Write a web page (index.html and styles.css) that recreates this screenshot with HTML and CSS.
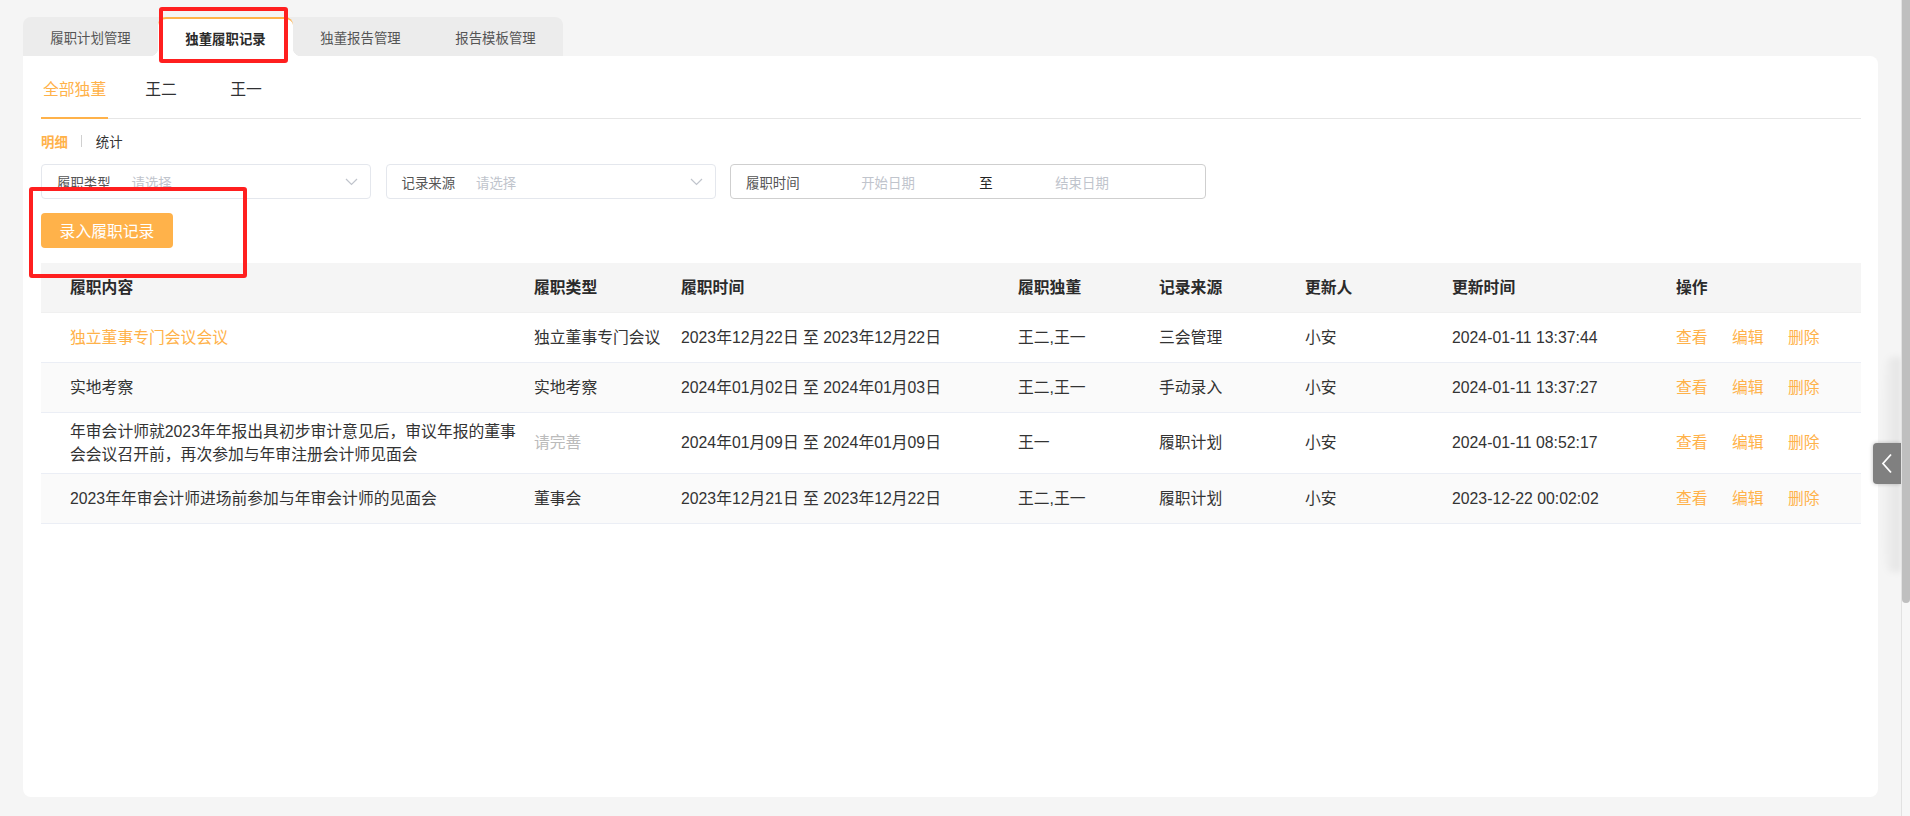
FILE: index.html
```html
<!DOCTYPE html>
<html lang="zh-CN">
<head>
<meta charset="utf-8">
<title>独董履职记录</title>
<link rel="stylesheet" href="styles.css">
</head>
<body>
<div class="page">
  <div class="tabs">
    <div class="tab">履职计划管理</div>
    <div class="tab active">独董履职记录</div>
    <div class="tab">独董报告管理</div>
    <div class="tab">报告模板管理</div>
  </div>
  <div class="panel">
    <div class="subtabs">
      <div class="subtab active"><span>全部独董</span></div>
      <div class="subtab"><span>王二</span></div>
      <div class="subtab"><span>王一</span></div>
    </div>
    <div class="views">
      <span class="view active">明细</span>
      <span class="sep"></span>
      <span class="view">统计</span>
    </div>
    <div class="filters">
      <div class="select">
        <span class="flabel">履职类型</span>
        <span class="ph">请选择</span>
        <svg class="chev" width="13" height="8" viewBox="0 0 13 8"><polyline points="1,1 6.5,6.5 12,1" fill="none" stroke="#c0c4cc" stroke-width="1.2"/></svg>
      </div>
      <div class="select">
        <span class="flabel">记录来源</span>
        <span class="ph">请选择</span>
        <svg class="chev" width="13" height="8" viewBox="0 0 13 8"><polyline points="1,1 6.5,6.5 12,1" fill="none" stroke="#c0c4cc" stroke-width="1.2"/></svg>
      </div>
      <div class="daterange">
        <span class="flabel dlabel">履职时间</span>
        <span class="dinput start">开始日期</span>
        <span class="dsep">至</span>
        <span class="dinput end">结束日期</span>
      </div>
    </div>
    <button class="btn">录入履职记录</button>
    <table class="grid">
      <colgroup>
        <col class="c1"><col class="c2"><col class="c3"><col class="c4"><col class="c5"><col class="c6"><col class="c7"><col class="c8">
      </colgroup>
      <thead>
        <tr>
          <th>履职内容</th><th>履职类型</th><th>履职时间</th><th>履职独董</th><th>记录来源</th><th>更新人</th><th>更新时间</th><th>操作</th>
        </tr>
      </thead>
      <tbody>
        <tr>
          <td><span class="link">独立董事专门会议会议</span></td>
          <td>独立董事专门会议</td>
          <td>2023年12月22日 至 2023年12月22日</td>
          <td>王二,王一</td>
          <td>三会管理</td>
          <td>小安</td>
          <td>2024-01-11 13:37:44</td>
          <td class="ops"><span class="link">查看</span><span class="link">编辑</span><span class="link">删除</span></td>
        </tr>
        <tr class="stripe">
          <td>实地考察</td>
          <td>实地考察</td>
          <td>2024年01月02日 至 2024年01月03日</td>
          <td>王二,王一</td>
          <td>手动录入</td>
          <td>小安</td>
          <td>2024-01-11 13:37:27</td>
          <td class="ops"><span class="link">查看</span><span class="link">编辑</span><span class="link">删除</span></td>
        </tr>
        <tr>
          <td>年审会计师就2023年年报出具初步审计意见后，审议年报的董事会会议召开前，再次参加与年审注册会计师见面会</td>
          <td><span class="muted">请完善</span></td>
          <td>2024年01月09日 至 2024年01月09日</td>
          <td>王一</td>
          <td>履职计划</td>
          <td>小安</td>
          <td>2024-01-11 08:52:17</td>
          <td class="ops"><span class="link">查看</span><span class="link">编辑</span><span class="link">删除</span></td>
        </tr>
        <tr class="stripe">
          <td>2023年年审会计师进场前参加与年审会计师的见面会</td>
          <td>董事会</td>
          <td>2023年12月21日 至 2023年12月22日</td>
          <td>王二,王一</td>
          <td>履职计划</td>
          <td>小安</td>
          <td>2023-12-22 00:02:02</td>
          <td class="ops"><span class="link">查看</span><span class="link">编辑</span><span class="link">删除</span></td>
        </tr>
      </tbody>
    </table>
  </div>
</div>

<div class="mark mark-tab"></div>
<div class="mark mark-btn"></div>

<div class="edge-shadow"></div>
<div class="collapse">
  <svg width="12" height="21" viewBox="0 0 12 21"><polyline points="10,1.5 2,10.5 10,19.5" fill="none" stroke="#ffffff" stroke-width="1.8"/></svg>
</div>
<div class="scrollbar"><div class="thumb"></div></div>
</body>
</html>
```

FILE: styles.css
```css
* { box-sizing: border-box; }

html, body {
  margin: 0;
  height: 100%;
  overflow: hidden;
}

body {
  background: #f5f5f5;
  font-family: "Liberation Sans", "Noto Sans CJK SC", sans-serif;
  color: #333333;
}

.page {
  padding: 17px 32px 0 23px;
}

/* top tabs */
.tabs {
  display: inline-flex;
  background: #ececec;
  border-radius: 8px 8px 0 0;
}

.tab {
  position: relative;
  width: 135px;
  height: 39px;
  display: flex;
  align-items: center;
  justify-content: center;
  font-size: 13.4px;
  color: #555555;
  padding-top: 1px;
}

.tab.active {
  background: #ffffff;
  color: #2b2b2b;
  font-weight: bold;
  border-top: 2px solid #ffb24a;
  border-radius: 8px 8px 0 0;
}

.tab.active::before,
.tab.active::after {
  content: "";
  position: absolute;
  bottom: 0;
  width: 8px;
  height: 8px;
}

.tab.active::before {
  left: -8px;
  background: radial-gradient(circle at 0 0, transparent 8px, #ffffff 8.5px);
}

.tab.active::after {
  right: -8px;
  background: radial-gradient(circle at 100% 0, transparent 8px, #ffffff 8.5px);
}

/* white panel */
.panel {
  background: #ffffff;
  border-radius: 0 8px 8px 8px;
  height: 741px;
  padding: 0 17px 0 18px;
}

.subtabs {
  display: flex;
  gap: 20.6px;
  height: 63px;
  border-bottom: 1px solid #e6e6e6;
}

.subtab {
  position: relative;
  min-width: 64.4px;
  display: flex;
  justify-content: center;
  padding-top: 22px;
  font-size: 15.8px;
  line-height: 24px;
  color: #303133;
}

.subtab.active {
  color: #ffb24a;
  padding-left: 2px;
  padding-right: 2px;
}

.subtab.active::after {
  content: "";
  position: absolute;
  left: 0;
  right: 0;
  bottom: -1px;
  height: 2px;
  background: #ffb24a;
}

.views {
  display: flex;
  align-items: center;
  margin-top: 12px;
  height: 20px;
  font-size: 13.4px;
}

.view { color: #333333; }
.view.active { color: #ffb24a; font-weight: bold; }

.sep {
  width: 1px;
  height: 12px;
  background: #d0d0d0;
  margin: 0 13.5px;
}

/* filters */
.filters {
  display: flex;
  margin-top: 13px;
  gap: 14.5px;
}

.select,
.daterange {
  height: 35px;
  border: 1px solid #e4e7ed;
  border-radius: 4px;
  display: flex;
  align-items: center;
  font-size: 13.4px;
}

.select {
  width: 330px;
  padding: 0 12px 0 15px;
}

.flabel {
  color: #555555;
  margin-right: 21px;
}

.ph {
  color: #c0c4cc;
  flex: 1;
}

.chev { display: block; }

.daterange {
  width: 476px;
  padding-left: 15px;
  border-color: #cfcfcf;
}

.dlabel {
  width: 67px;
  margin-right: 0;
}

.dinput {
  color: #c0c4cc;
  text-align: center;
}

.dinput.start { width: 150px; }
.dinput.end { width: 146px; }

.dsep {
  width: 46px;
  text-align: center;
  color: #222222;
}

/* button */
.btn {
  display: block;
  margin-top: 14px;
  width: 132px;
  height: 35px;
  border: none;
  border-radius: 4px;
  background: #ffb24a;
  color: #ffffff;
  font-family: inherit;
  font-size: 15.8px;
  padding: 0;
}

/* table */
.grid {
  margin-top: 15px;
  width: 1820px;
  border-collapse: collapse;
  table-layout: fixed;
  font-size: 15.8px;
  line-height: 23px;
}

.c1 { width: 481px; }
.c2 { width: 147px; }
.c3 { width: 337px; }
.c4 { width: 141px; }
.c5 { width: 146px; }
.c6 { width: 147px; }
.c7 { width: 224px; }
.c8 { width: 197px; }

.grid th,
.grid td {
  text-align: left;
  vertical-align: middle;
  padding: 7px 4px 7px 12px;
  border-bottom: 1px solid #ebeef5;
  color: #333333;
}

.grid th {
  background: #f5f5f5;
  font-weight: bold;
  color: #2b2b2b;
  border-bottom-color: #f0f0f0;
}

.grid th:first-child,
.grid td:first-child {
  padding-left: 29px;
  padding-right: 0;
}

.grid thead tr { height: 49px; }
.grid tbody tr { height: 50px; }

.grid tr.stripe td { background: #fafafa; }

.link { color: #ffb24a; }
.muted { color: #bbbbbb; }

.ops .link { margin-right: 24.4px; }

/* screenshot annotations */
.mark {
  position: absolute;
  border: 4px solid #ff1f1f;
  border-radius: 3px;
  pointer-events: none;
}

.mark-tab {
  left: 159px;
  top: 7px;
  width: 129px;
  height: 56px;
}

.mark-btn {
  left: 29px;
  top: 187px;
  width: 218px;
  height: 91px;
}

/* right edge widgets */
.edge-shadow {
  position: fixed;
  left: 1879px;
  top: 357px;
  width: 22px;
  height: 215px;
  background: linear-gradient(to right, rgba(0,0,0,0), rgba(0,0,0,0.07));
  border-radius: 50% 0 0 50%;
  filter: blur(3px);
}

.collapse {
  position: fixed;
  left: 1873px;
  top: 443px;
  width: 28px;
  height: 41px;
  background: #808080;
  border-radius: 4px 0 0 4px;
  box-shadow: 0 0 4px rgba(0,0,0,0.25);
  display: flex;
  align-items: center;
  justify-content: center;
}

.scrollbar {
  position: fixed;
  right: 0;
  top: 0;
  width: 9px;
  height: 816px;
  background: #f7f7f7;
  border-left: 1px solid #e2e2e2;
}

.thumb {
  height: 603px;
  background: #bfbfbf;
  border-radius: 0 0 4px 4px;
}
```
